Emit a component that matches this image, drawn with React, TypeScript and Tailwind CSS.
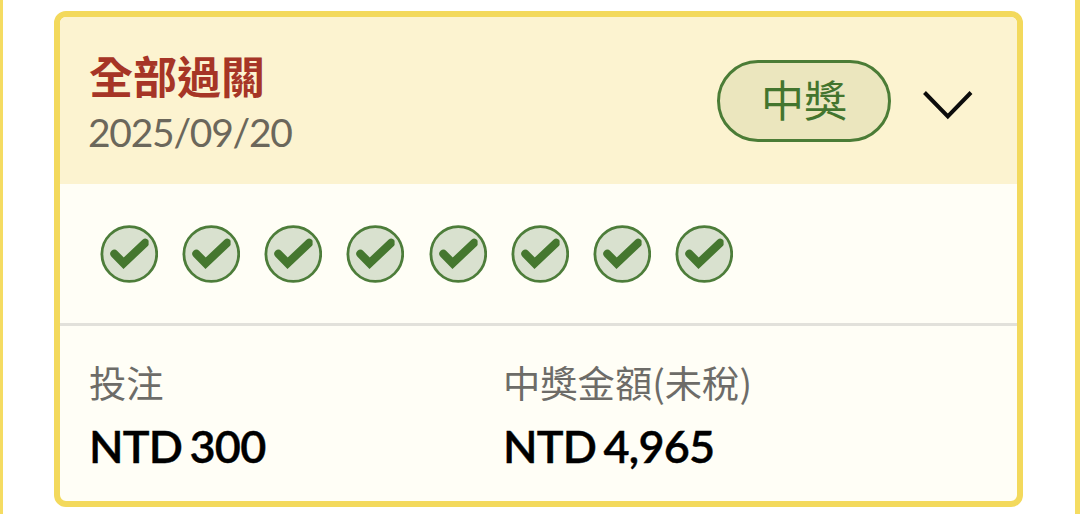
import clsx from "clsx";

type Field = { label: string; value: string; className: string };

const fields: Field[] = [
  { label: "投注", value: "NTD 300", className: "w-[414px]" },
  { label: "中獎金額(未稅)", value: "NTD 4,965", className: "flex-1" },
];

const legs = Array.from({ length: 8 }, (_, i) => i);

function CheckIcon() {
  return (
    <svg width="58" height="58" viewBox="0 0 58 58" fill="none">
      <circle cx="29.3" cy="29" r="27.4" fill="#d9e1cf" stroke="#4d7d3a" strokeWidth="2.8" />
      {/* nested viewport trims the right end of the tick */}
      <svg width="48.6" height="58" viewBox="0 0 48.6 58">
        <path d="M14.4 28.8 L23.6 38.2 L45.3 17.8" stroke="#45772f" strokeWidth="8.2" strokeLinecap="round" />
      </svg>
    </svg>
  );
}

export default function App() {
  return (
    <div className="h-[514px] overflow-hidden border-r-[5px] border-l-[3px] border-[#f5dc62] bg-white pt-[11px] pl-[51px] font-[Lato,'Noto_Sans_CJK_TC',sans-serif]">
      <div className="h-[496px] w-[969px] overflow-hidden rounded-xl border-6 border-[#f3d95c] bg-[#fffef6]">
        <div className="flex h-[167px] bg-[#fcf3d0] pl-[29px]">
          <div className="w-[628px] pt-[32px]">
            <h2 className="text-[44px] leading-[56px] font-bold text-[#a63526]">全部過關</h2>
            <p className="-ml-px text-[39px] leading-[54px] tracking-[-1.25px] text-[#6b675b]">2025/09/20</p>
          </div>
          <div className="mt-[43px] flex h-[82px] w-[174px] items-center justify-center rounded-full border-3 border-[#4b7c36] bg-[#ebe6be] text-[43px] text-[#43752e]">
            中獎
          </div>
          <svg className="mt-[71px] ml-[31px]" width="52" height="34" viewBox="0 0 52 34" fill="none">
            <path d="M2.5 4.5 L25.8 28.5 L49 4.5" stroke="#0c0c0c" strokeWidth="4" />
          </svg>
        </div>
        <div className="flex h-[142px] gap-[24.15px] border-b-3 border-[#e2e1db] pt-[41px] pl-10">
          {legs.map((leg) => (
            <CheckIcon key={leg} />
          ))}
        </div>
        <div className="flex pt-[29px] pl-[29px]">
          {fields.map((field) => (
            <div key={field.label} className={clsx("whitespace-nowrap", field.className)}>
              <div className="font-['Noto_Sans_CJK_TC',sans-serif] text-[37.3px] leading-[54px] text-[#6d6c68]">
                {field.label}
              </div>
              <div className="mt-0.5 text-[45px] leading-[70px] font-semibold tracking-[-0.8px] text-black [-webkit-text-stroke:0.4px_black] [word-spacing:-3px]">
                {field.value}
              </div>
            </div>
          ))}
        </div>
      </div>
    </div>
  );
}
